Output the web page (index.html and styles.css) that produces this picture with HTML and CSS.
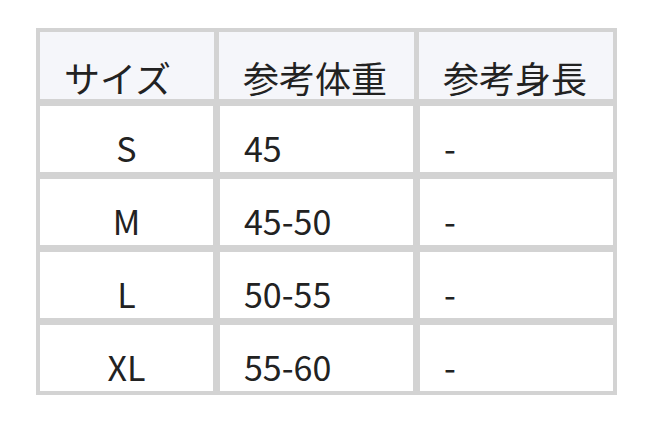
FILE: index.html
```html
<!DOCTYPE html>
<html lang="ja">
<head>
<meta charset="utf-8">
<link rel="stylesheet" href="styles.css">
</head>
<body>
<div class="table">
  <div class="head">
    <div class="cell th">サイズ</div>
    <div class="cell th">参考体重</div>
    <div class="cell th">参考身長</div>
  </div>
  <div class="body">
    <div class="cell td center">S</div>
    <div class="cell td">45</div>
    <div class="cell td">-</div>
    <div class="cell td center">M</div>
    <div class="cell td">45-50</div>
    <div class="cell td">-</div>
    <div class="cell td center">L</div>
    <div class="cell td">50-55</div>
    <div class="cell td">-</div>
    <div class="cell td center">XL</div>
    <div class="cell td">55-60</div>
    <div class="cell td">-</div>
  </div>
</div>
</body>
</html>
```
FILE: styles.css
```css
html, body {
  margin: 0;
  padding: 0;
  background: #ffffff;
}
body {
  padding: 28px 0 0 36px;
  font-family: "Noto Sans CJK JP", "Noto Sans", sans-serif;
  color: #222222;
}
.table {
  width: 581px;
  box-sizing: border-box;
  background: #d3d3d3;
  padding: 4px;
  display: flex;
  flex-direction: column;
  gap: 7px;
}
.head {
  display: grid;
  grid-template-columns: 174px 195px 194px;
  column-gap: 5px;
  height: 67px;
}
.body {
  display: grid;
  grid-template-columns: 173px 193px 193px;
  grid-auto-rows: 66px;
  gap: 7px;
}
.cell {
  display: flex;
  align-items: flex-end;
  font-size: 34px;
  line-height: 1;
  box-sizing: border-box;
}
.th {
  background: #f5f6fa;
  font-size: 36px;
  padding: 0 0 4px 24px;
}
.td {
  background: #ffffff;
  padding: 0 0 7px 24px;
}
.td.center {
  justify-content: center;
  padding-left: 0;
}
```
